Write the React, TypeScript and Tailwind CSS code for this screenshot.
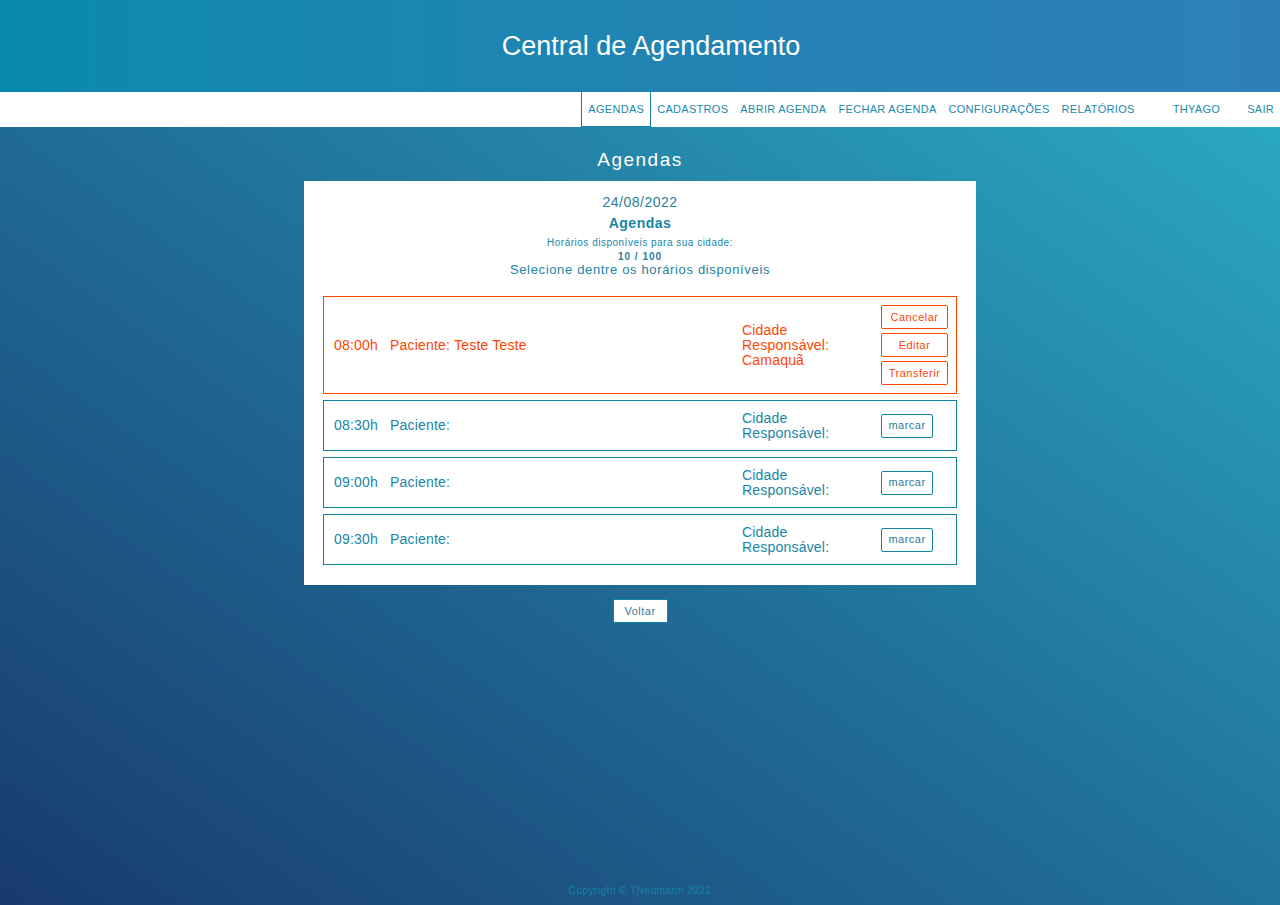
import React from 'react'

type Slot = {
  hora: string
  paciente: string
  cidade: string
  marcado: boolean
}

const slots: Slot[] = [
  { hora: '08:00h', paciente: 'Teste Teste', cidade: 'Camaquã', marcado: true },
  { hora: '08:30h', paciente: '', cidade: '', marcado: false },
  { hora: '09:00h', paciente: '', cidade: '', marcado: false },
  { hora: '09:30h', paciente: '', cidade: '', marcado: false },
]

const menu = [
  'Agendas',
  'Cadastros',
  'Abrir Agenda',
  'Fechar Agenda',
  'Configurações',
  'Relatórios',
]

const SlotRow: React.FC<{ slot: Slot }> = ({ slot }) => {
  const tone = slot.marcado
    ? 'border-[#ff4500] text-[#ff4500]'
    : 'border-[#10819f] text-[#1786a8]'
  const btn = slot.marcado
    ? 'border-[#ff4500] text-[#ff4500] w-[67px]'
    : 'border-[#10819f] text-[#2a7d9c] w-[52px]'

  return (
    <div
      className={`flex items-center border pl-[10px] pr-2 py-2 text-[14px] tracking-[0.2px] ${tone}`}
    >
      <span className="w-[56px]">{slot.hora}</span>
      <span className="flex-1">
        Paciente:{slot.paciente ? ` ${slot.paciente}` : ''}
      </span>
      <div className="w-[139px] leading-[15px] min-h-[33px] flex flex-col justify-center">
        <span>Cidade</span>
        <span>Responsável:</span>
        {slot.cidade && <span>{slot.cidade}</span>}
      </div>
      <div className="flex flex-col gap-[4px]">
        {slot.marcado ? (
          <>
            <button className={`h-6 border rounded-[2px] bg-white text-[11px] tracking-[0.5px] ${btn}`}>
              Cancelar
            </button>
            <button className={`h-6 border rounded-[2px] bg-white text-[11px] tracking-[0.5px] ${btn}`}>
              Editar
            </button>
            <button className={`h-6 border rounded-[2px] bg-white text-[11px] tracking-[0.5px] ${btn}`}>
              Transferir
            </button>
          </>
        ) : (
          <button className={`h-6 border rounded-[2px] bg-white text-[11px] tracking-[0.5px] mr-[15px] ${btn}`}>
            marcar
          </button>
        )}
      </div>
    </div>
  )
}

const App: React.FC = () => {
  return (
    <div className="min-h-screen flex flex-col bg-linear-to-tr from-[#183a6e] to-[#2bb0c8] font-['Liberation_Sans',Arial,sans-serif]">
      <header className="h-[92px] flex items-center justify-center pl-[22px] bg-linear-to-r from-[#0889ae] to-[#2e7fb8]">
        <h1 className="text-[27px] text-white">Central de Agendamento</h1>
      </header>

      <nav className="h-[35px] bg-white flex justify-end">
        {menu.map((item, i) => (
          <a
            key={item}
            className={`h-full flex items-center px-[6px] text-[11px] uppercase tracking-[0.3px] text-[#1a88ad] ${
              i === 0 ? 'border border-t-0 border-[#10819f]' : ''
            }`}
          >
            {item}
          </a>
        ))}
        <a className="h-full flex items-center px-[6px] ml-[26px] text-[11px] uppercase tracking-[0.3px] text-[#1a88ad]">
          Thyago
        </a>
        <a className="h-full flex items-center px-[6px] ml-[15px] text-[11px] uppercase tracking-[0.3px] text-[#1a88ad]">
          Sair
        </a>
      </nav>

      <main className="flex-1 flex flex-col items-center">
        <h2 className="mt-[20px] mb-[8px] text-[19px] text-white tracking-[1.5px] leading-[26px]">
          Agendas
        </h2>

        <div className="w-[672px] bg-white px-[19px] pt-[12px] pb-[20px]">
          <div className="flex flex-col items-center text-[#1786a8] mb-[19px]">
            <span className="text-[14px] tracking-[0.5px] leading-[18px] text-[#2a7d9c]">
              24/08/2022
            </span>
            <span className="mt-[3px] text-[14px] font-bold tracking-[0.5px] leading-[18px]">
              Agendas
            </span>
            <span className="mt-[4px] text-[10px] tracking-[0.5px] leading-[13px]">
              Horários disponíveis para sua cidade:
            </span>
            <span className="mt-[1px] text-[10px] font-bold tracking-[1px] leading-[13px] text-[#2a7d9c]">
              10 / 100
            </span>
            <span className="text-[13px] tracking-[0.65px] leading-[14px]">
              Selecione dentre <span className="text-[#2a7d9c]">os horários disponíveis</span>
            </span>
          </div>

          <div className="flex flex-col gap-[6px]">
            {slots.map((s) => (
              <SlotRow key={s.hora} slot={s} />
            ))}
          </div>
        </div>

        <button className="mt-[14px] h-[24px] w-[55px] bg-white border border-[#0d87a5] text-[11px] tracking-[0.5px] text-[#2d7a9a]">
          Voltar
        </button>
      </main>

      <footer className="h-[22px] flex items-start justify-center">
        <span className="text-[10px] tracking-[0.5px] text-[#1580a5]">
          Copyright © TNeumann 2022
        </span>
      </footer>
    </div>
  )
}

export default App
